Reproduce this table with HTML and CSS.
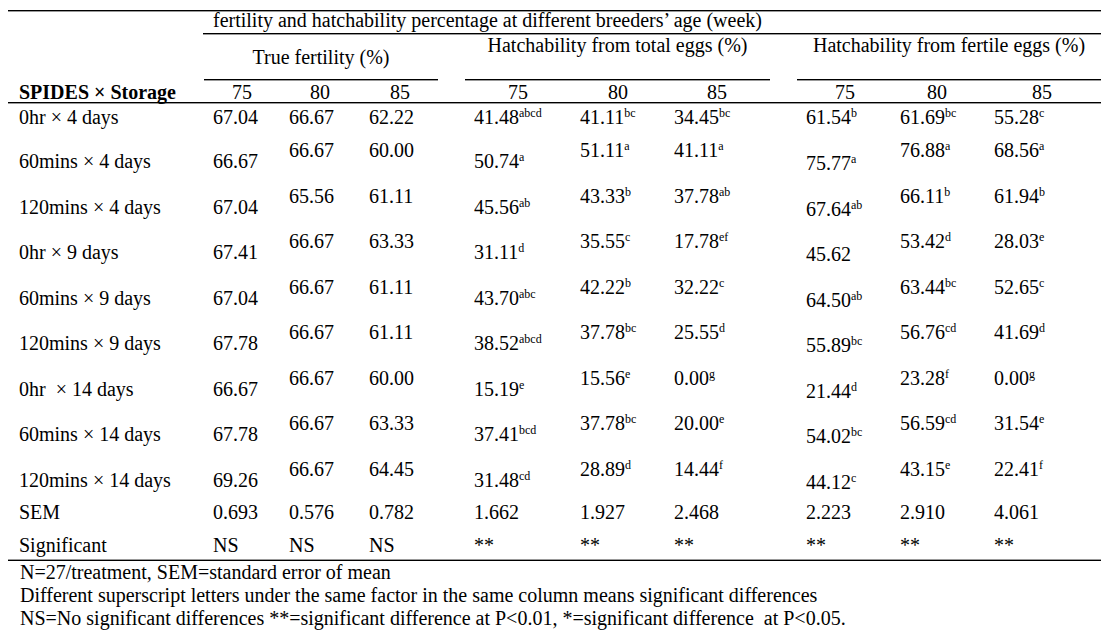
FILE: index.html
```html
<!DOCTYPE html>
<html>
<head>
<meta charset="utf-8">
<link rel="stylesheet" href="styles.css">
</head>
<body>
<div class="tbl">
  <div class="blank"></div>
  <div class="super">fertility and hatchability percentage at different breeders’ age (week)</div>

  <div class="blank"></div>
  <div class="grp g1">True fertility (%)</div>
  <div class="grp g2">Hatchability from total eggs (%)</div>
  <div class="grp g3">Hatchability from fertile eggs (%)</div>

  <div class="hrow">
    <div class="hl">SPIDES × Storage</div>
    <div>75</div><div>80</div><div>85</div>
    <div>75</div><div>80</div><div>85</div>
    <div>75</div><div>80</div><div>85</div>
  </div>

  <div class="row first">
    <div>0hr × 4 days</div>
    <div>67.04</div><div>66.67</div><div>62.22</div>
    <div>41.48<sup>abcd</sup></div><div>41.11<sup>bc</sup></div><div>34.45<sup>bc</sup></div>
    <div>61.54<sup>b</sup></div><div>61.69<sup>bc</sup></div><div>55.28<sup>c</sup></div>
  </div>
  <div class="row">
    <div class="lo">60mins × 4 days</div>
    <div class="lo">66.67</div><div>66.67</div><div>60.00</div>
    <div class="lo">50.74<sup>a</sup></div><div>51.11<sup>a</sup></div><div>41.11<sup>a</sup></div>
    <div class="lo2">75.77<sup>a</sup></div><div>76.88<sup>a</sup></div><div>68.56<sup>a</sup></div>
  </div>
  <div class="row">
    <div class="lo">120mins × 4 days</div>
    <div class="lo">67.04</div><div>65.56</div><div>61.11</div>
    <div class="lo">45.56<sup>ab</sup></div><div>43.33<sup>b</sup></div><div>37.78<sup>ab</sup></div>
    <div class="lo2">67.64<sup>ab</sup></div><div>66.11<sup>b</sup></div><div>61.94<sup>b</sup></div>
  </div>
  <div class="row">
    <div class="lo">0hr × 9 days</div>
    <div class="lo">67.41</div><div>66.67</div><div>63.33</div>
    <div class="lo">31.11<sup>d</sup></div><div>35.55<sup>c</sup></div><div>17.78<sup>ef</sup></div>
    <div class="lo2">45.62</div><div>53.42<sup>d</sup></div><div>28.03<sup>e</sup></div>
  </div>
  <div class="row">
    <div class="lo">60mins × 9 days</div>
    <div class="lo">67.04</div><div>66.67</div><div>61.11</div>
    <div class="lo">43.70<sup>abc</sup></div><div>42.22<sup>b</sup></div><div>32.22<sup>c</sup></div>
    <div class="lo2">64.50<sup>ab</sup></div><div>63.44<sup>bc</sup></div><div>52.65<sup>c</sup></div>
  </div>
  <div class="row">
    <div class="lo">120mins × 9 days</div>
    <div class="lo">67.78</div><div>66.67</div><div>61.11</div>
    <div class="lo">38.52<sup>abcd</sup></div><div>37.78<sup>bc</sup></div><div>25.55<sup>d</sup></div>
    <div class="lo2">55.89<sup>bc</sup></div><div>56.76<sup>cd</sup></div><div>41.69<sup>d</sup></div>
  </div>
  <div class="row">
    <div class="lo">0hr &nbsp;× 14 days</div>
    <div class="lo">66.67</div><div>66.67</div><div>60.00</div>
    <div class="lo">15.19<sup>e</sup></div><div>15.56<sup>e</sup></div><div>0.00<sup>g</sup></div>
    <div class="lo2">21.44<sup>d</sup></div><div>23.28<sup>f</sup></div><div>0.00<sup>g</sup></div>
  </div>
  <div class="row">
    <div class="lo">60mins × 14 days</div>
    <div class="lo">67.78</div><div>66.67</div><div>63.33</div>
    <div class="lo">37.41<sup>bcd</sup></div><div>37.78<sup>bc</sup></div><div>20.00<sup>e</sup></div>
    <div class="lo2">54.02<sup>bc</sup></div><div>56.59<sup>cd</sup></div><div>31.54<sup>e</sup></div>
  </div>
  <div class="row">
    <div class="lo">120mins × 14 days</div>
    <div class="lo">69.26</div><div>66.67</div><div>64.45</div>
    <div class="lo">31.48<sup>cd</sup></div><div>28.89<sup>d</sup></div><div>14.44<sup>f</sup></div>
    <div class="lo2">44.12<sup>c</sup></div><div>43.15<sup>e</sup></div><div>22.41<sup>f</sup></div>
  </div>
  <div class="row flat">
    <div>SEM</div>
    <div>0.693</div><div>0.576</div><div>0.782</div>
    <div>1.662</div><div>1.927</div><div>2.468</div>
    <div>2.223</div><div>2.910</div><div>4.061</div>
  </div>
  <div class="row flat">
    <div>Significant</div>
    <div>NS</div><div>NS</div><div>NS</div>
    <div>**</div><div>**</div><div>**</div>
    <div>**</div><div>**</div><div>**</div>
  </div>
</div>
<div class="foot">
  <div>N=27/treatment, SEM=standard error of mean</div>
  <div>Different superscript letters under the same factor in the same column means significant differences</div>
  <div>NS=No significant differences **=significant difference at P&lt;0.01, *=significant difference &nbsp;at P&lt;0.05.</div>
</div>
</body>
</html>
```

FILE: styles.css
```css
body {
  margin: 8px;
  font-family: "Liberation Serif", "Times New Roman", serif;
  font-size: 20px;
  color: #000;
  background: #fff;
}

.tbl {
  margin-top: 2px;
  border-top: 1px solid #000;
  border-bottom: 1px solid #000;
  box-shadow: inset 0 1px 0 rgba(0, 0, 0, 0.4), inset 0 -1px 0 rgba(0, 0, 0, 0.4);
  display: grid;
  grid-template-columns: 195px 86px 80px 93px 118px 94px 121px 105px 94px 107px;
  grid-template-rows: 23px 46px 23px 34px repeat(8, 45.5px) 33px 26px;
  line-height: 22px;
  white-space: nowrap;
}

.super {
  grid-column: span 9;
  border-bottom: 1px solid #000;
  box-shadow: 0 1px 0 rgba(0, 0, 0, 0.4);
  padding-left: 10px;
  line-height: 18px;
}

.grp {
  border-bottom: 1px solid #000;
  box-shadow: 0 1px 0 rgba(0, 0, 0, 0.4);
  text-align: center;
  grid-column: span 3;
}
.g1 { margin-right: 24px; margin-left: 1px; padding-top: 12px; }
.g2 { margin-right: 25px; margin-left: 3px; }
.g3 { margin-left: 2px; }

.hrow, .row { display: contents; }

.hrow > div {
  border-bottom: 1px solid #000;
  box-shadow: 0 1px 0 rgba(0, 0, 0, 0.4);
  padding-top: 1px;
}
.hrow > .hl { font-weight: bold; padding-left: 11px; }
.hrow > div:nth-child(2) { padding-left: 29px; }
.hrow > div:nth-child(3) { padding-left: 21px; }
.hrow > div:nth-child(4) { padding-left: 21px; }
.hrow > div:nth-child(5) { padding-left: 46px; }
.hrow > div:nth-child(6) { padding-left: 28px; }
.hrow > div:nth-child(7) { padding-left: 33px; }
.hrow > div:nth-child(8) { padding-left: 40px; }
.hrow > div:nth-child(9) { padding-left: 27px; }
.hrow > div:nth-child(10) { padding-left: 38px; }

.row > div { padding-top: 2px; }
.row > div:nth-child(1) { padding-left: 11px; }
.row > div:nth-child(2) { padding-left: 10px; }
.row > div:nth-child(5) { padding-left: 12px; }
.row > div:nth-child(8) { padding-left: 11px; }

.row.first > div { padding-top: 3px; }
.row.flat > div { padding-top: 0; }
.row > .lo { padding-top: 13px; }
.row > .lo2 { padding-top: 15px; }

sup {
  font-size: 12px;
  line-height: 0;
  vertical-align: 7px;
}

.foot {
  line-height: 23px;
  padding-left: 12px;
}
```
